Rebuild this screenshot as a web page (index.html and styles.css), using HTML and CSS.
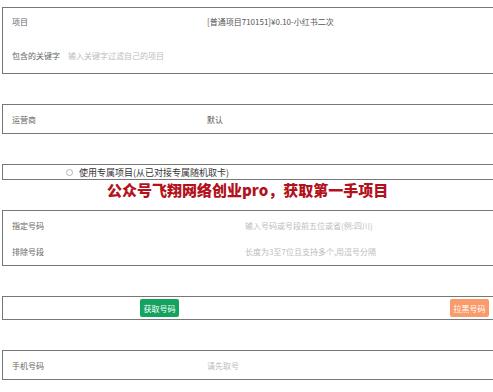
FILE: index.html
```html
<!DOCTYPE html>
<html lang="zh-CN">
<head>
<meta charset="utf-8">
<link rel="stylesheet" href="styles.css">
</head>
<body>
<div class="page">
  <section class="box box-project">
    <div class="row row-a">
      <span class="label">项目</span>
      <span class="value">[普通项目710151]¥0.10-小红书二次</span>
    </div>
    <div class="row row-b">
      <span class="label-inline">包含的关键字</span>
      <span class="placeholder">输入关键字过滤自己的项目</span>
    </div>
  </section>

  <section class="box box-carrier">
    <div class="row">
      <span class="label">运营商</span>
      <span class="value">默认</span>
    </div>
  </section>

  <section class="box box-radio">
    <label class="radio-row">
      <span class="radio"></span>
      <span class="radio-text">使用专属项目(从已对接专属随机取卡)</span>
    </label>
  </section>

  <div class="watermark">公众号飞翔网络创业pro，获取第一手项目</div>

  <section class="box box-numbers">
    <div class="row">
      <span class="label wide">指定号码</span>
      <span class="placeholder">输入号码或号段前五位或省(例:四川)</span>
    </div>
    <div class="row">
      <span class="label wide">排除号段</span>
      <span class="placeholder">长度为3至7位且支持多个,用逗号分隔</span>
    </div>
  </section>

  <section class="box box-actions">
    <button class="btn btn-green">获取号码</button>
    <button class="btn btn-orange">拉黑号码</button>
  </section>

  <section class="box box-phone">
    <div class="row">
      <span class="label">手机号码</span>
      <span class="placeholder">请先取号</span>
    </div>
  </section>
</div>
</body>
</html>
```

FILE: styles.css
```css
* { box-sizing: border-box; }
html, body { margin: 0; padding: 0; background: #fff; }
body {
  font-family: "Noto Sans CJK SC", "Liberation Sans", sans-serif;
  font-size: 8px;
  color: #666;
}
.page {
  position: relative;
  padding: 7px 0 0 2px;
}
.box {
  border: 1px solid #777;
  border-right: none;
  margin-bottom: 30px;
}
.row {
  display: flex;
  align-items: center;
  padding-left: 9px;
}
.label { width: 195px; flex: none; }
.label.wide { width: 233px; }
.label-inline { margin-right: 8px; }
.value { color: #555; }
.placeholder { color: #bdbdbd; }

.box-project { height: 67px; padding-top: 4px; }
.box-project .row-a { height: 18px; }
.box-project .row-b { height: 18px; margin-top: 16px; }

.box-carrier { height: 30px; }
.box-carrier .row { height: 28px; }

.box-radio { height: 16px; }
.radio-row {
  display: flex;
  align-items: center;
  height: 14px;
  padding-left: 63px;
}
.radio {
  width: 7px; height: 7px;
  border: 1px solid #b5b5b5;
  border-radius: 50%;
  margin-right: 6px;
}
.radio-text { font-size: 9px; color: #333; }

.watermark {
  position: absolute;
  left: 107px;
  top: 180px;
  font-size: 15px;
  font-weight: 900;
  color: #b3121c;
  line-height: 20px;
  white-space: nowrap;
}

.box-numbers { height: 56px; padding-top: 1px; }
.box-numbers .row { height: 26px; }

.box-actions {
  height: 24px;
  display: flex;
  justify-content: space-between;
  align-items: flex-start;
  padding: 2px 4px 0 137px;
}
.btn {
  height: 18px;
  width: 39px;
  border: none;
  border-radius: 2px;
  color: #fff;
  font-family: inherit;
  font-size: 8px;
  padding: 0;
}
.btn-green { background: #14a35f; }
.btn-orange { background: #f99b6a; }

.box-phone { height: 30px; }
.box-phone .row { height: 28px; }
```
